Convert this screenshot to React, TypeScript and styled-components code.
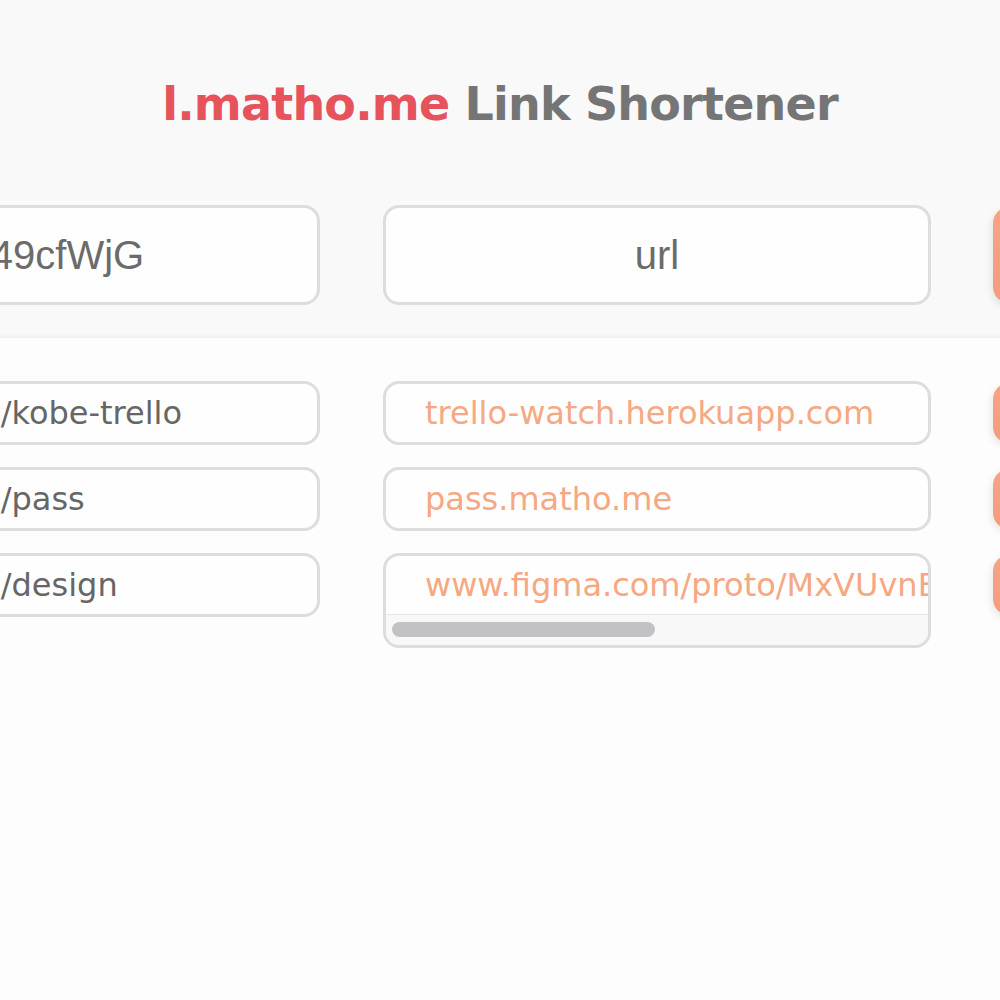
import React from "react";
import styled, { createGlobalStyle } from "styled-components";

const GlobalStyle = createGlobalStyle`
  html, body {
    margin: 0;
    padding: 0;
    background: #fdfdfd;
    overflow: hidden;
  }
  body {
    font-family: "DejaVu Sans", "Liberation Sans", sans-serif;
  }
`;

const Page = styled.div`
  width: 1000px;
  min-height: 1000px;
  background: #fdfdfd;
`;

const Header = styled.header`
  background: #f9f9fa;
  height: 338px;
  box-sizing: border-box;
  padding-top: 74px;
  box-shadow: inset 0 -6px 6px -5px rgba(0, 0, 0, 0.06);
`;

const Title = styled.h1`
  margin: 0;
  text-align: center;
  font-family: "DejaVu Sans", sans-serif;
  font-weight: bold;
  font-size: 46px;
  line-height: 60px;
  letter-spacing: -0.8px;
  color: #757575;
`;

const Brand = styled.span`
  color: #e6535b;
`;

const Row = styled.div<{ $top?: number }>`
  display: flex;
  align-items: flex-start;
  margin-left: -185px;
  margin-top: ${(p) => p.$top ?? 0}px;
`;

const Field = styled.div<{ $w: number; $h: number; $gapAfter: number }>`
  flex-shrink: 0;
  box-sizing: border-box;
  width: ${(p) => p.$w}px;
  height: ${(p) => p.$h}px;
  margin-right: ${(p) => p.$gapAfter}px;
  border: 3px solid #dddcde;
  border-radius: 16px;
  background: #fefefe;
  overflow: hidden;
  display: flex;
  flex-direction: column;
`;

const BigText = styled.div`
  flex: 1;
  display: flex;
  align-items: center;
  justify-content: center;
  font-family: "Liberation Sans", Arial, sans-serif;
  font-size: 40px;
  color: #6b6b6b;
`;

const ShortText = styled.div`
  flex: 1;
  display: flex;
  align-items: center;
  padding-left: 0;
  white-space: nowrap;
  font-size: 32px;
  color: #666666;
`;

const LinkText = styled.div`
  flex-shrink: 0;
  display: flex;
  align-items: center;
  height: 58px;
  padding-left: 39px;
  white-space: nowrap;
  font-size: 32px;
  color: #f5a882;
`;

const ScrollTrack = styled.div`
  flex: 1;
  box-sizing: border-box;
  border-top: 1px solid #e6e6e7;
  background: #f8f8f9;
  padding: 7px 6px;
`;

const ScrollThumb = styled.div<{ $w: number }>`
  width: ${(p) => p.$w}px;
  height: 15px;
  border-radius: 8px;
  background: #c2c1c3;
`;

const GoButton = styled.button<{ $h: number }>`
  flex-shrink: 0;
  width: 187px;
  height: ${(p) => p.$h}px;
  margin-top: 2px;
  border: none;
  border-radius: 16px;
  background: linear-gradient(180deg, #f6a486 0%, #f59b7d 100%);
  box-shadow: 0 3px 10px rgba(0, 0, 0, 0.12);
`;

const List = styled.div`
  margin-top: 43px;
  display: flex;
  flex-direction: column;
  gap: 22px;
`;

const links = [
  { short: "l.matho.me/kobe-trello", url: "trello-watch.herokuapp.com" },
  { short: "l.matho.me/pass", url: "pass.matho.me" },
  {
    short: "l.matho.me/design",
    url: "www.figma.com/proto/MxVUvnBnLc8uFPMrQEYkFJ/Design?node-id=1",
    scroll: true,
  },
];

export default function App() {
  return (
    <Page>
      <GlobalStyle />
      <Header>
        <Title>
          <Brand>l.matho.me</Brand> Link Shortener
        </Title>
        <Row $top={71}>
          <Field $w={505} $h={100} $gapAfter={63}>
            <BigText>49cfWjG</BigText>
          </Field>
          <Field $w={548} $h={100} $gapAfter={62}>
            <BigText>url</BigText>
          </Field>
          <GoButton $h={96} />
        </Row>
      </Header>
      <List>
        {links.map((l) => (
          <Row key={l.short}>
            <Field $w={505} $h={64} $gapAfter={63}>
              <ShortText>{l.short}</ShortText>
            </Field>
            <Field $w={548} $h={l.scroll ? 95 : 64} $gapAfter={62}>
              <LinkText>{l.url}</LinkText>
              {l.scroll && (
                <ScrollTrack>
                  <ScrollThumb $w={263} />
                </ScrollTrack>
              )}
            </Field>
            <GoButton $h={60} />
          </Row>
        ))}
      </List>
    </Page>
  );
}
